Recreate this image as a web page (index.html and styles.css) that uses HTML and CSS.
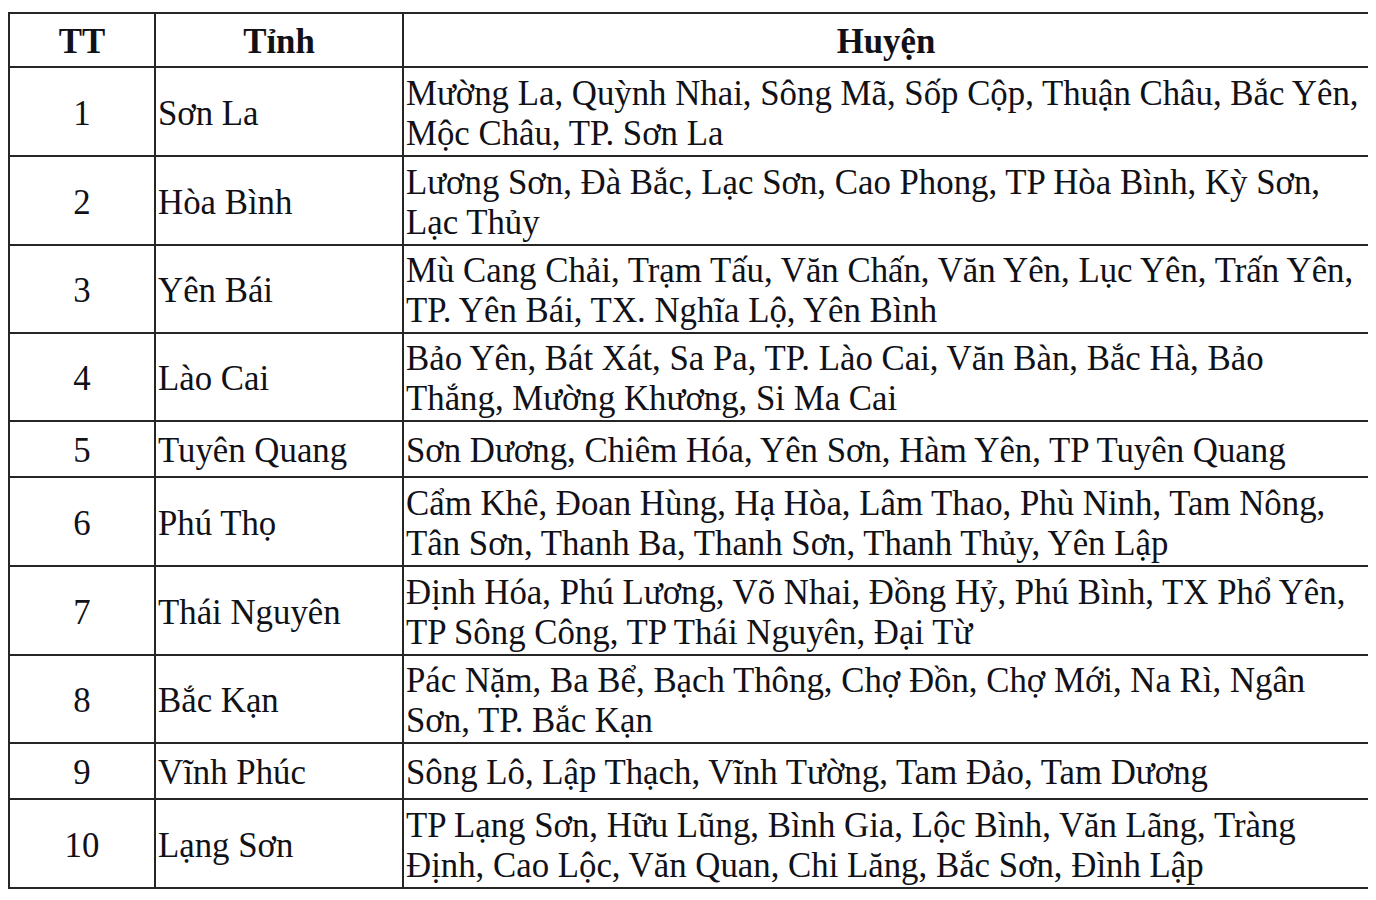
FILE: index.html
```html
<!DOCTYPE html>
<html lang="vi">
<head>
<meta charset="utf-8">
<link rel="stylesheet" href="styles.css">
</head>
<body>
<table class="tbl">
<colgroup><col class="c-tt"><col class="c-tinh"><col class="c-huyen"></colgroup>
<thead>
<tr class="r-head"><th>TT</th><th>Tỉnh</th><th>Huyện</th></tr>
</thead>
<tbody>
<tr class="r2"><td class="num">1</td><td>Sơn La</td><td>Mường La, Quỳnh Nhai, Sông Mã, Sốp Cộp, Thuận Châu, Bắc Yên,<br>Mộc Châu, TP. Sơn La</td></tr>
<tr class="r2"><td class="num">2</td><td>Hòa Bình</td><td>Lương Sơn, Đà Bắc, Lạc Sơn, Cao Phong, TP Hòa Bình, Kỳ Sơn,<br>Lạc Thủy</td></tr>
<tr class="r2s"><td class="num">3</td><td>Yên Bái</td><td>Mù Cang Chải, Trạm Tấu, Văn Chấn, Văn Yên, Lục Yên, Trấn Yên,<br>TP. Yên Bái, TX. Nghĩa Lộ, Yên Bình</td></tr>
<tr class="r2s"><td class="num">4</td><td>Lào Cai</td><td>Bảo Yên, Bát Xát, Sa Pa, TP. Lào Cai, Văn Bàn, Bắc Hà, Bảo<br>Thắng, Mường Khương, Si Ma Cai</td></tr>
<tr class="r1"><td class="num">5</td><td>Tuyên Quang</td><td>Sơn Dương, Chiêm Hóa, Yên Sơn, Hàm Yên, TP Tuyên Quang</td></tr>
<tr class="r2"><td class="num">6</td><td>Phú Thọ</td><td>Cẩm Khê, Đoan Hùng, Hạ Hòa, Lâm Thao, Phù Ninh, Tam Nông,<br>Tân Sơn, Thanh Ba, Thanh Sơn, Thanh Thủy, Yên Lập</td></tr>
<tr class="r2"><td class="num">7</td><td>Thái Nguyên</td><td>Định Hóa, Phú Lương, Võ Nhai, Đồng Hỷ, Phú Bình, TX Phổ Yên,<br>TP Sông Công, TP Thái Nguyên, Đại Từ</td></tr>
<tr class="r2s"><td class="num">8</td><td>Bắc Kạn</td><td>Pác Nặm, Ba Bể, Bạch Thông, Chợ Đồn, Chợ Mới, Na Rì, Ngân<br>Sơn, TP. Bắc Kạn</td></tr>
<tr class="r1"><td class="num">9</td><td>Vĩnh Phúc</td><td>Sông Lô, Lập Thạch, Vĩnh Tường, Tam Đảo, Tam Dương</td></tr>
<tr class="r2"><td class="num">10</td><td>Lạng Sơn</td><td>TP Lạng Sơn, Hữu Lũng, Bình Gia, Lộc Bình, Văn Lãng, Tràng<br>Định, Cao Lộc, Văn Quan, Chi Lăng, Bắc Sơn, Đình Lập</td></tr>
</tbody>
</table>
</body>
</html>
```

FILE: styles.css
```css
html, body {
  background: #ffffff;
}
body {
  margin: 12px 8px 8px 8px;
}
.tbl {
  border-collapse: collapse;
  table-layout: fixed;
  width: 1360px;
  font-family: "Liberation Serif", "Times New Roman", serif;
  font-size: 34.8px;
  line-height: 40px;
  color: #111118;
}
.c-tt { width: 146px; }
.c-tinh { width: 248px; }
.c-huyen { width: 966px; }
.tbl th, .tbl td {
  border: 2px solid #262626;
  padding: 4px 0 0 2px;
  vertical-align: middle;
  text-align: left;
  white-space: nowrap;
}
.tbl th {
  font-weight: bold;
  text-align: center;
  padding: 4px 0 0 0;
}
.r-head th { height: 48px; }
.r2 td { height: 83px; }
.r2s td { height: 82px; }
.r1 td { height: 50px; }
.tbl td.num {
  text-align: center;
  padding: 4px 0 0 0;
}
```
